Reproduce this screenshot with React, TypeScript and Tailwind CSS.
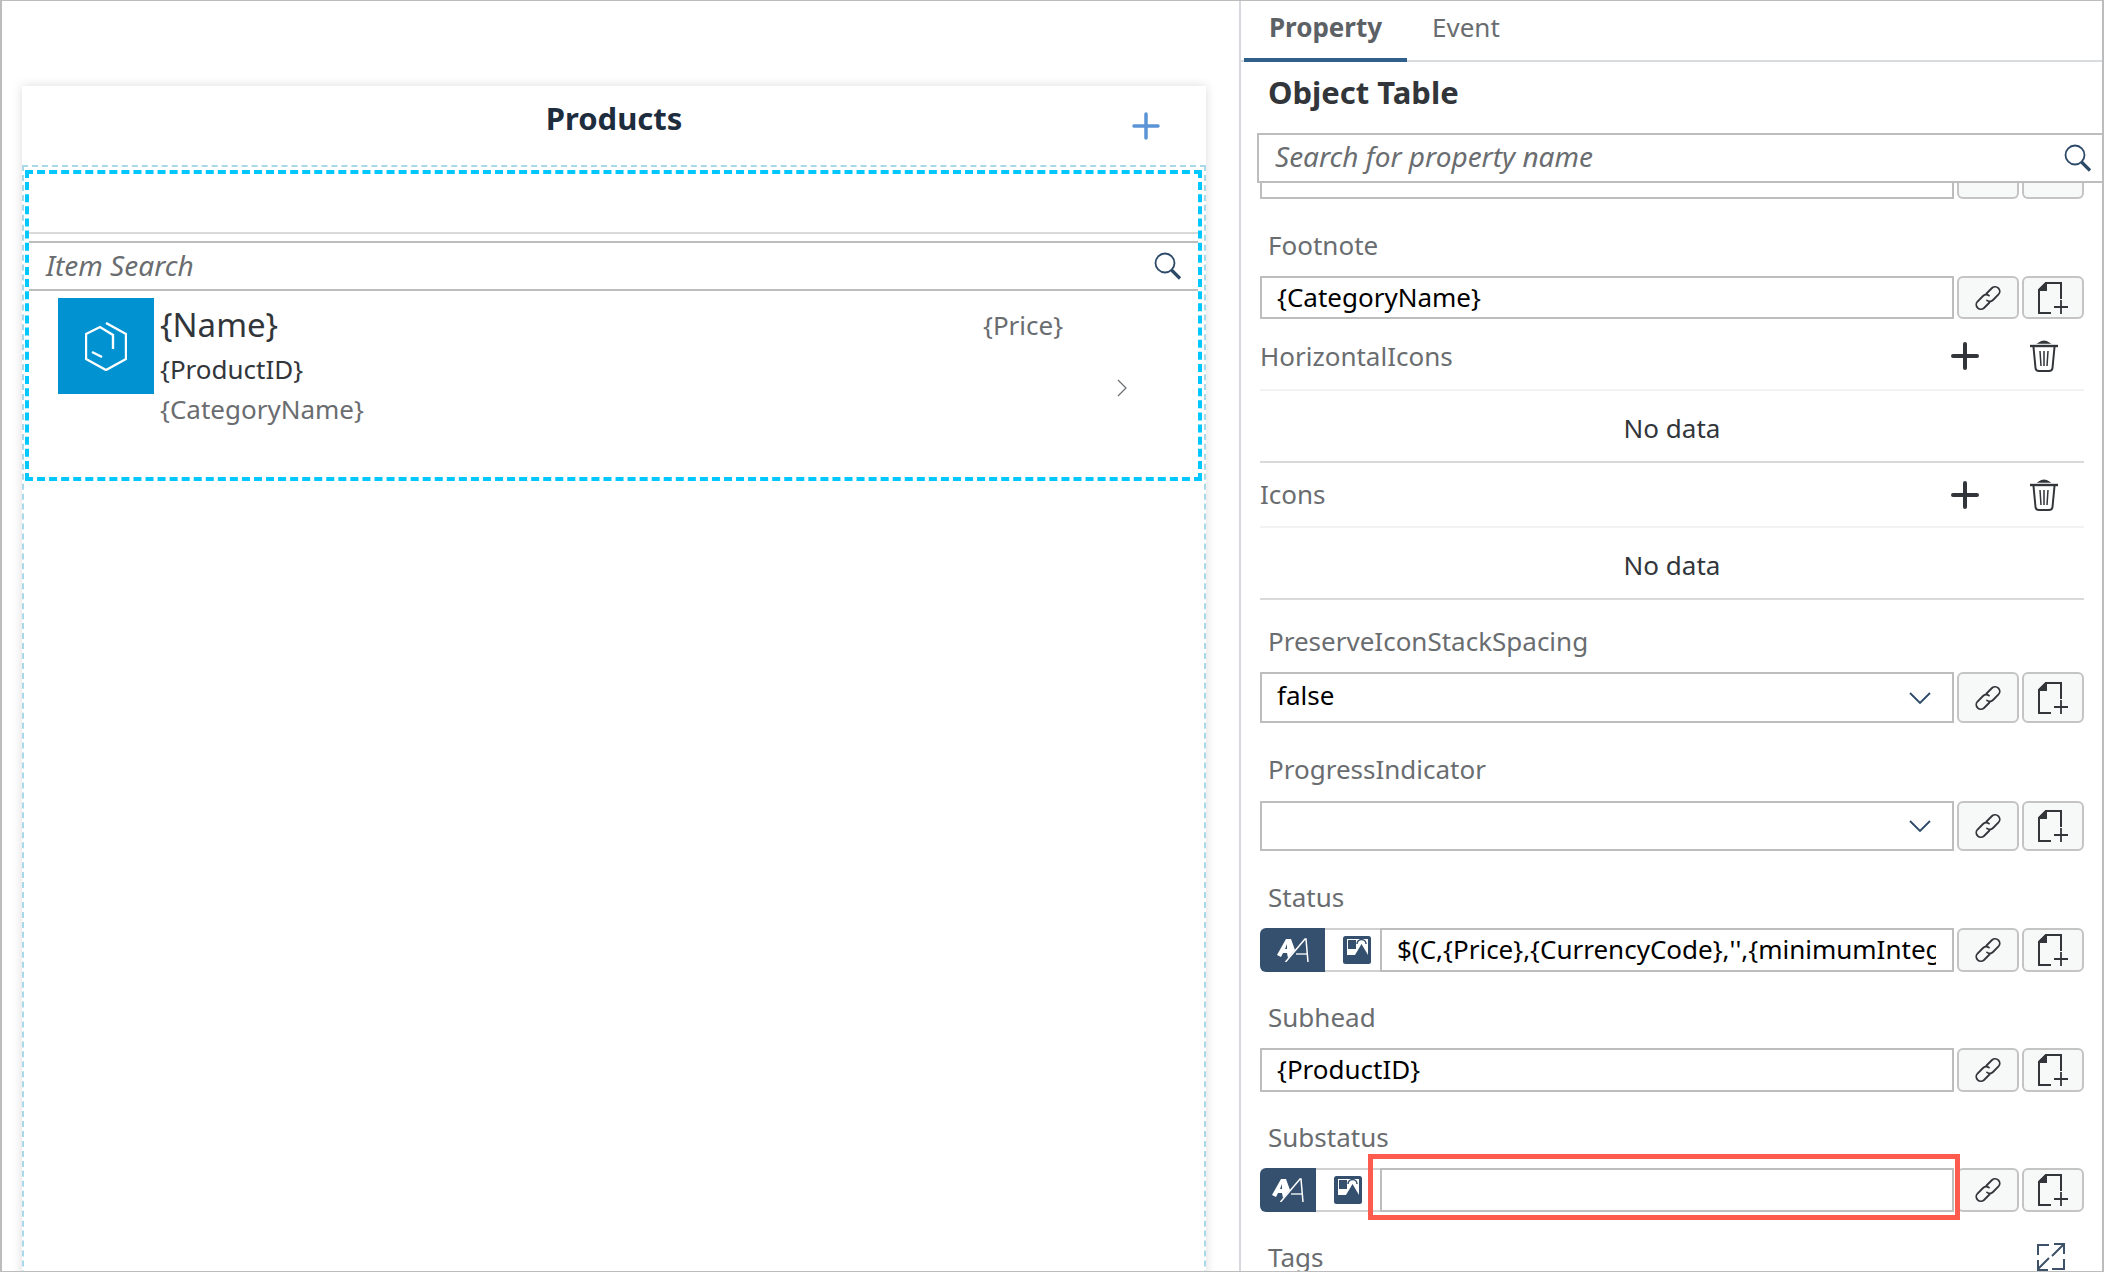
import React from 'react';

const font = { fontFamily: '"Noto Sans", sans-serif' };

function SearchIcon({ className }: { className?: string }) {
  return (
    <svg viewBox="0 0 28 28" className={className} fill="none" stroke="#2c4a68">
      <circle cx="11" cy="11" r="9.5" strokeWidth="1.8" />
      <path d="M17.5 18 L26 26.5" strokeWidth="3.2" />
    </svg>
  );
}

function LinkIcon() {
  return (
    <svg viewBox="0 0 28 28" className="w-[28px] h-[28px]" fill="none" stroke="#32363a" strokeWidth="1.8" strokeLinecap="round">
      <path d="M12.5 9.5 L18 4 a4.6 4.6 0 0 1 6.5 6.5 L19 16 a4.6 4.6 0 0 1 -6 .4" />
      <path d="M15.5 18.5 L10 24 a4.6 4.6 0 0 1 -6.5 -6.5 L9 12 a4.6 4.6 0 0 1 6 -.4" />
    </svg>
  );
}

function NewFileIcon() {
  return (
    <svg viewBox="0 0 30 32" className="w-[30px] h-[32px]" fill="none" stroke="#32363a" strokeWidth="2">
      <path d="M13 31 H1 V8 L8 1 H23 V17" />
      <path d="M1 8 L8 1 V8 Z" fill="#32363a" />
      <path d="M16 25 H30 M23 18 V32" strokeWidth="1.8" />
    </svg>
  );
}

function PlusIcon({ color, strokeWidth }: { color: string; strokeWidth: number }) {
  return (
    <svg viewBox="0 0 28 28" className="w-[28px] h-[28px]" fill="none" stroke={color} strokeWidth={strokeWidth} strokeLinecap="round">
      <path d="M14 2 V26 M2 14 H26" />
    </svg>
  );
}

function TrashIcon() {
  return (
    <svg viewBox="0 0 28 32" className="w-[28px] h-[32px]" fill="none" stroke="#32363a">
      <path d="M0 6 H28" strokeWidth="2.4" />
      <path d="M9 3 Q14 -0.5 19 3 Z" fill="#32363a" strokeWidth="1.5" />
      <path d="M3.5 7 L5.5 28 Q5.8 31 9 31 H19 Q22.2 31 22.5 28 L24.5 7" strokeWidth="2" />
      <path d="M10 11 L11 26 M14 11 V26 M18 11 L17 26" strokeWidth="1.5" />
    </svg>
  );
}

function TypeIcon() {
  return (
    <svg viewBox="0 0 32 24" className="w-[32px] h-[24px]" fill="none">
      <path fillRule="evenodd" d="M0 17 L9 1 H14 L18 12 L11 20 L10 15 H6 L4 19 Z M8 11 H10 L10 6 Z" fill="#ffffff" />
      <path d="M8.5 24 L28 1 H29 L31 24" stroke="#ffffff" strokeWidth="1.5" />
      <path d="M19 16 H30" stroke="#ffffff" strokeWidth="1.3" />
    </svg>
  );
}

function ImageIcon() {
  return (
    <svg viewBox="0 0 28 28" className="w-[28px] h-[28px]">
      <rect x="0" y="0" width="28" height="28" rx="2.5" fill="#34506e" />
      <rect x="4" y="3" width="21" height="16" fill="#ffffff" />
      <rect x="5" y="4" width="8" height="9" fill="#34506e" />
      <path d="M14 8 a4.5 4.5 0 0 1 9 0" fill="none" stroke="#34506e" strokeWidth="1.5" />
      <path d="M12 19 L18.5 8 L25 19 Z" fill="#34506e" />
    </svg>
  );
}

function ChevronDown() {
  return (
    <svg viewBox="0 0 22 12" className="w-[22px] h-[12px]" fill="none" stroke="#2c4a68" strokeWidth="1.8">
      <path d="M1 1 L11 11 L21 1" />
    </svg>
  );
}

function ExpandIcon() {
  return (
    <svg viewBox="0 0 28 28" className="w-[28px] h-[28px]" fill="none" stroke="#3d5168" strokeWidth="2">
      <path d="M1 12 V2 H12 M15 13 L26 2 M17 1 H27 V11" />
      <path d="M27 16 V26 H15 M1 26 L12 15 M1 17 V27 H11" />
    </svg>
  );
}

function ActionButtons() {
  return (
    <>
      <div className="flex w-[62px] shrink-0 items-center justify-center rounded-md border-2 border-[#c4c4c4] bg-[#f7f8f8]">
        <LinkIcon />
      </div>
      <div className="flex w-[62px] shrink-0 items-center justify-center rounded-md border-2 border-[#c4c4c4] bg-[#f7f8f8]">
        <NewFileIcon />
      </div>
    </>
  );
}

function TextInput({ value }: { value?: string }) {
  return (
    <div className="flex h-full min-w-0 flex-1 items-center border-2 border-[#bdbdbd] bg-white pb-[1px] pl-[15px] text-[26px] text-black">
      {value}
    </div>
  );
}

function Label({ text, className }: { text: string; className: string }) {
  return <div className={`h-[36px] pl-[8px] text-[26px] leading-[36px] text-[#6a6d70] ${className}`}>{text}</div>;
}

function SectionHeader({ title, className }: { title: string; className: string }) {
  return (
    <div className={`flex items-center border-b-2 border-[#f2f2f2] text-[26px] text-[#6a6d70] ${className}`}>
      <span className="flex-1">{title}</span>
      <span className="mr-[51px]"><PlusIcon color="#32363a" strokeWidth={4} /></span>
      <span className="mr-[26px]"><TrashIcon /></span>
    </div>
  );
}

function NoData({ className }: { className: string }) {
  return (
    <div className={`flex items-center justify-center border-b-2 border-[#d9d9d9] pt-[5px] text-[26px] text-[#32363a] ${className}`}>
      No data
    </div>
  );
}

function Segmented({ first, className }: { first: string; className: string }) {
  return (
    <>
      <div className={`flex shrink-0 items-center justify-center rounded-l-md bg-[#34506e] ${first}`}>
        <TypeIcon />
      </div>
      <div className={`flex shrink-0 items-center border-y-2 border-[#d0d0d0] pl-[18px] ${className}`}>
        <ImageIcon />
      </div>
    </>
  );
}

export default function App() {
  return (
    <div style={font} className="flex h-[1272px] w-[2104px] overflow-hidden border-y border-l-2 border-r-2 border-[#bcbcbc] bg-white">
      {/* Canvas */}
      <div className="w-[1237px] shrink-0 pl-[20px] pt-[85px]">
        <div className="flex h-[1300px] w-[1184px] flex-col bg-white shadow-[0_0_10px_rgba(0,0,0,0.14)]">
          <div className="grid h-[79px] shrink-0 grid-cols-[1fr_auto_1fr] items-center">
            <div />
            <div className="-mt-[16px] text-[31px] font-bold leading-[40px] text-[#1d2d3e]">Products</div>
            <div className="justify-self-end pr-[46px]">
              <PlusIcon color="#5b94d6" strokeWidth={3.5} />
            </div>
          </div>
          <div className="flex-1 border-2 border-dashed border-[#a9d9e8] pl-[1px] pr-[2px] pt-[3px]">
            <div className="h-[311px] border-4 border-dashed border-[#00c8ff]">
              <div className="h-[60px] border-b-2 border-[#d9d9d9]" />
              <div className="mt-[7px] flex h-[50px] items-center justify-between border-y-2 border-[#bdbdbd] pl-[17px] pr-[16px] text-[28px] italic text-[#6a6d70]">
                <span className="-mt-[2px]">Item Search</span>
                <SearchIcon className="h-[28px] w-[28px]" />
              </div>
              <div className="flex pl-[29px] pt-[7px]">
                <div className="flex h-[96px] w-[96px] shrink-0 items-center justify-center bg-[#0092d1]">
                  <svg viewBox="0 0 42 49" className="h-[49px] w-[42px]" fill="none" stroke="#ffffff" strokeWidth="2.4">
                    <path d="M21 1 L41 12 V37 L21 48 L1 37 V12 L15 5 L28 13 V27" />
                    <path d="M7 30 L17 35" />
                  </svg>
                </div>
                <div className="ml-[6px] w-[823px] shrink-0 pt-[5px] text-[26px]">
                  <div className="text-[33px] leading-[44px] text-[#32363a]">{'{Name}'}</div>
                  <div className="mt-[4px] leading-[36px] text-[#32363a]">{'{ProductID}'}</div>
                  <div className="mt-[4px] leading-[36px] text-[#6a6d70]">{'{CategoryName}'}</div>
                </div>
                <div className="w-[134px] shrink-0 pt-[9px] text-[26px] leading-[36px] text-[#6a6d70]">{'{Price}'}</div>
                <svg viewBox="0 0 10 18" className="mt-[81px] h-[18px] w-[10px]" fill="none" stroke="#6a6d70" strokeWidth="1.2">
                  <path d="M1 1 L9 9 L1 17" />
                </svg>
              </div>
            </div>
          </div>
        </div>
      </div>

      {/* Property panel */}
      <div className="min-w-0 flex-1 border-l-2 border-[#d5d8dc] bg-white">
        <div className="flex h-[61px] border-b-2 border-[#d9dcdf] text-[26px] leading-[36px]">
          <div className="ml-[3px] h-[61px] w-[163px] border-b-4 border-[#2f5f8a] pt-[8px] text-center font-bold text-[#5c6166]">Property</div>
          <div className="pl-[25px] pt-[8px] text-[#6a6d70]">Event</div>
        </div>
        <div className="pl-[27px] pt-[8px] text-[31px] font-bold leading-[44px] text-[#32363a]">Object Table</div>
        <div className="ml-[16px] mt-[19px] flex h-[50px] items-center justify-between border-2 border-r-0 border-[#bdbdbd] pl-[16px] pr-[10px] text-[28px] italic text-[#6a6d70]">
          <span className="-mt-[5px]">Search for property name</span>
          <SearchIcon className="h-[28px] w-[28px]" />
        </div>

        <div className="pl-[19px] pr-[18px]">
          <div className="flex h-[16px] gap-[3px]">
            <div className="flex-1 border-x-2 border-b-2 border-[#bdbdbd]" />
            <div className="w-[62px] rounded-b-md border-x-2 border-b-2 border-[#c4c4c4] bg-[#f7f8f8]" />
            <div className="w-[62px] rounded-b-md border-x-2 border-b-2 border-[#c4c4c4] bg-[#f7f8f8]" />
          </div>

          <Label text="Footnote" className="mt-[28px]" />
          <div className="mt-[13px] flex h-[43px] gap-[3px]">
            <TextInput value="{CategoryName}" />
            <ActionButtons />
          </div>

          <SectionHeader title="HorizontalIcons" className="mt-[6px] h-[66px] pb-[2px]" />
          <NoData className="h-[72px]" />
          <SectionHeader title="Icons" className="h-[65px]" />
          <NoData className="h-[72px]" />

          <Label text="PreserveIconStackSpacing" className="mt-[23px]" />
          <div className="mt-[13px] flex h-[51px] gap-[3px]">
            <div className="flex h-full flex-1 items-center justify-between border-2 border-[#bdbdbd] pl-[15px] pr-[21px] text-[26px] text-black">
              <span className="-mt-[5px]">false</span>
              <ChevronDown />
            </div>
            <ActionButtons />
          </div>

          <Label text="ProgressIndicator" className="mt-[28px]" />
          <div className="mt-[14px] flex h-[50px] gap-[3px]">
            <div className="flex h-full flex-1 items-center justify-end border-2 border-[#bdbdbd] pr-[21px]">
              <ChevronDown />
            </div>
            <ActionButtons />
          </div>

          <Label text="Status" className="mt-[28px]" />
          <div className="mt-[13px] flex h-[44px]">
            <Segmented first="w-[65px]" className="w-[55px]" />
            <div className="flex h-full min-w-0 flex-1 items-center border-2 border-[#bdbdbd] pb-[1px] pl-[15px] pr-[16px] text-[26px] text-black">
              <span className="overflow-hidden whitespace-nowrap">{"$(C,{Price},{CurrencyCode},'',{minimumIntegerDigits:1})"}</span>
            </div>
            <div className="ml-[3px] flex gap-[3px]">
              <ActionButtons />
            </div>
          </div>

          <Label text="Subhead" className="mt-[27px]" />
          <div className="mt-[13px] flex h-[44px] gap-[3px]">
            <TextInput value="{ProductID}" />
            <ActionButtons />
          </div>

          <Label text="Substatus" className="mt-[27px]" />
          <div className="relative mt-[13px] flex h-[44px]">
            <Segmented first="w-[56px]" className="w-[64px]" />
            <TextInput />
            <div className="ml-[3px] flex gap-[3px]">
              <ActionButtons />
            </div>
            <div className="absolute -top-[14px] left-[108px] h-[66px] w-[592px] border-[5px] border-[#ff5a4e]" />
          </div>

          <div className="mt-[27px] flex h-[36px] items-center justify-between pl-[8px] pr-[19px] text-[26px] text-[#6a6d70]">
            <span>Tags</span>
            <ExpandIcon />
          </div>
        </div>
      </div>
    </div>
  );
}
